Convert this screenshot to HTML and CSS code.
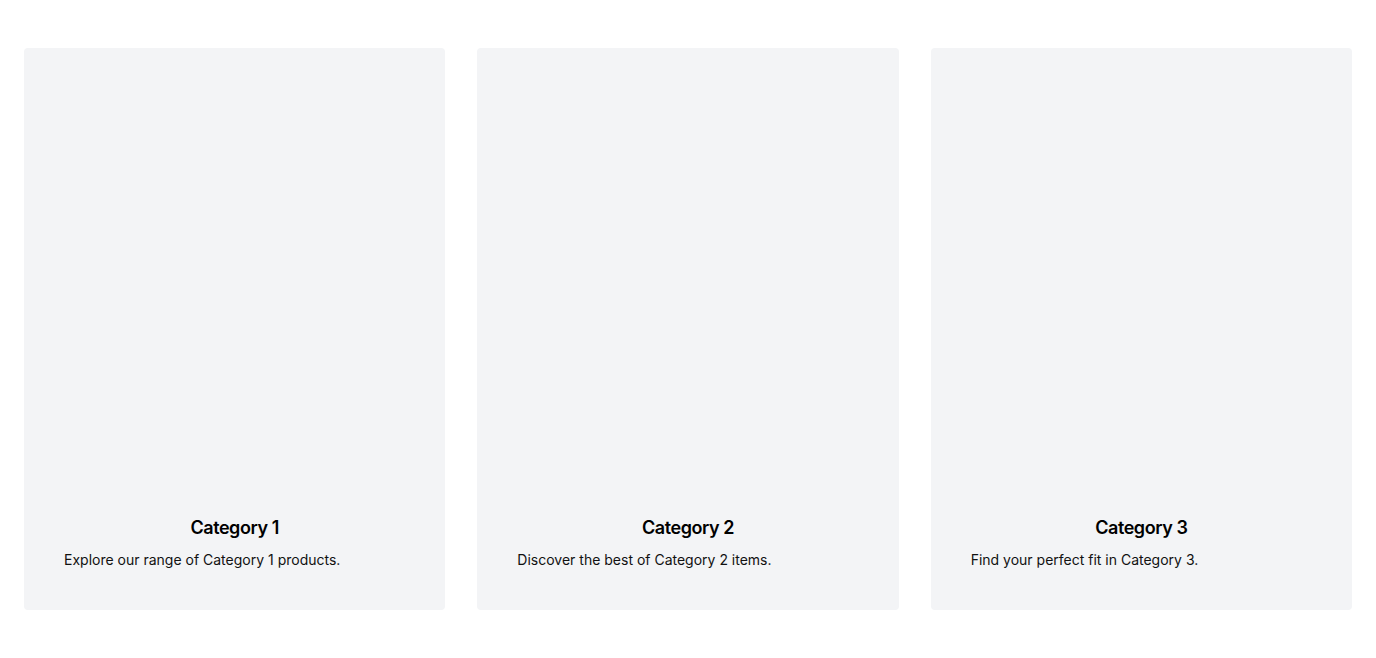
FILE: index.html
```html
<!DOCTYPE html>
<html lang="en">
<head>
<meta charset="utf-8">
<title>Categories</title>
<link rel="stylesheet" href="styles.css">
</head>
<body>
<main class="grid">
  <article class="card">
    <h3 class="card-title">Category 1</h3>
    <p class="card-text">Explore our range of Category 1 products.</p>
  </article>
  <article class="card">
    <h3 class="card-title">Category 2</h3>
    <p class="card-text">Discover the best of Category 2 items.</p>
  </article>
  <article class="card">
    <h3 class="card-title">Category 3</h3>
    <p class="card-text">Find your perfect fit in Category 3.</p>
  </article>
</main>
</body>
</html>
```

FILE: styles.css
```css
html, body {
  margin: 0;
  padding: 0;
  background: #ffffff;
  font-family: Inter, "Liberation Sans", sans-serif;
  color: #111827;
}

.grid {
  display: grid;
  grid-template-columns: repeat(3, 1fr);
  gap: 32px;
  padding: 48px 24px;
}

.card {
  height: 562px;
  box-sizing: border-box;
  background: #f3f4f6;
  border-radius: 4px;
  padding: 40px;
  display: flex;
  flex-direction: column;
  justify-content: flex-end;
}

.card-title {
  margin: 0;
  font-size: 18px;
  line-height: 28px;
  font-weight: 600;
  letter-spacing: -0.025em;
  text-align: center;
  color: #000000;
}

.card-text {
  margin: 8px 0 0;
  font-size: 14px;
  line-height: 20px;
  color: #111111;
}
```
